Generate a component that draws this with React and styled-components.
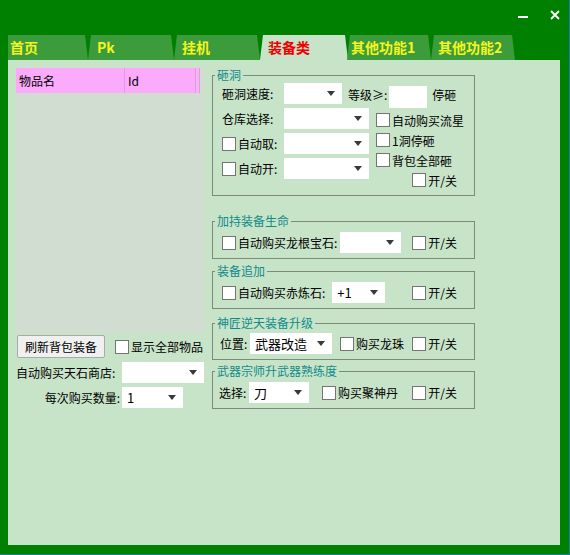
import React from 'react'
import styled, { createGlobalStyle } from 'styled-components';

const GlobalStyle = createGlobalStyle`
    html, body {
        margin: 0;
        padding: 0;
    }
    body {
        font-family: "Noto Sans CJK SC", "Liberation Sans", sans-serif;
        font-size: 12px;
        color: #000;
    }
`;

const Window = styled.div`
    width: 570px;
    height: 555px;
    background: #008000;
    display: flex;
    flex-direction: column;
    box-sizing: border-box;
    border-right: 1px solid #1c7f9c;
    border-bottom: 1px solid #1c7f9c;
`;

const TitleBar = styled.div`
    height: 35px;
    display: flex;
    justify-content: flex-end;
    align-items: flex-start;
    gap: 21px;
    padding: 10px 9px 0 0;
    box-sizing: border-box;
`;

const TabStrip = styled.div`
    height: 25px;
    display: flex;
    padding-left: 8px;
`;

const Tab = styled.div`
    width: ${p => p.$w}px;
    margin-right: ${p => p.$active ? -1 : 0}px;
    background: ${p => p.$active ? '#c8e4c8' : '#3c9c3c'};
    color: ${p => p.$active ? '#f00000' : '#f5f51e'};
    font-weight: bold;
    font-size: 14px;
    line-height: 25px;
    padding-left: ${p => p.$pad}px;
    box-sizing: border-box;
    white-space: nowrap;
    clip-path: ${p => p.$first
        ? 'polygon(0 0, calc(100% - 3px) 0, 100% 100%, 0 100%)'
        : 'polygon(3px 0, calc(100% - 3px) 0, 100% 100%, 0 100%)'};
`;

const Panel = styled.div`
    flex: 1;
    margin: 0 9px 9px 8px;
    background: #c8e4c8;
    display: flex;
    gap: 7px;
    padding: 7px 0 0 8px;
`;

const LeftCol = styled.div`
    width: 189px;
    display: flex;
    flex-direction: column;
`;

const List = styled.div`
    height: 266px;
    background: #d0ddd0;
    padding-top: 1px;
    box-sizing: border-box;
`;

const ListHeader = styled.div`
    display: flex;
    height: 25px;
    width: 184px;
`;

const HeaderCell = styled.div`
    width: ${p => p.$w}px;
    background: ${p => p.$stub ? '#f3b6f3' : '#fcaafc'};
    border-right: 1px solid #e39ae3;
    padding-left: 3px;
    line-height: 25px;
    box-sizing: border-box;
`;

const ButtonRow = styled.div`
    display: flex;
    align-items: center;
    gap: 10px;
    margin-top: 2px;
    padding-left: 1px;
`;

const PushButton = styled.button`
    width: 88px;
    height: 23px;
    background: #f0f0f0;
    border: 1px solid #a9a9a9;
    border-radius: 2px;
    font: inherit;
    padding: 0;
    color: #000;
`;

const FormRow = styled.div`
    display: flex;
    align-items: ${p => p.$top ? 'flex-start' : 'center'};
    margin-top: ${p => p.$mt || 0}px;
    padding-top: ${p => p.$pt || 0}px;
    height: ${p => p.$h || 21}px;
`;

const Label = styled.span`
    width: ${p => p.$w ? `${p.$w}px` : 'auto'};
    flex-shrink: 0;
    text-align: ${p => p.$right ? 'right' : 'left'};
    margin-left: ${p => p.$ml || 0}px;
    line-height: ${p => p.$lh ? `${p.$lh}px` : 'normal'};
    white-space: nowrap;
`;

const DropBox = styled.div`
    width: ${p => p.$w}px;
    height: 21px;
    margin-left: ${p => p.$ml || 0}px;
    background: #fff;
    display: flex;
    align-items: center;
    padding-left: 5px;
    box-sizing: border-box;
    flex-shrink: 0;
    font-size: 13px;
`;

const Caret = styled.span`
    margin-left: auto;
    margin-right: 7px;
    border-left: 4px solid transparent;
    border-right: 4px solid transparent;
    border-top: 5px solid #3a3a3a;
`;

const TextBox = styled.div`
    width: 38px;
    height: 22px;
    background: #fff;
    margin: 3px 0 0 2px;
    flex-shrink: 0;
`;

const Box = styled.span`
    width: 14px;
    height: 14px;
    background: #fff;
    border: 1px solid #747474;
    box-sizing: border-box;
    flex-shrink: 0;
`;

const CheckLabel = styled.label`
    display: inline-flex;
    align-items: center;
    gap: 2px;
    width: ${p => p.$w ? `${p.$w}px` : 'auto'};
    margin-left: ${p => p.$auto ? 'auto' : `${p.$ml || 0}px`};
    flex-shrink: 0;
    white-space: nowrap;
`;

const RightCol = styled.div`
    width: 263px;
    display: flex;
    flex-direction: column;
`;

const Group = styled.fieldset`
    margin: ${p => p.$mt || 0}px 0 0 0;
    padding: 0 17px 5px 9px;
    border: 1px solid #7c8a7c;
    min-width: 0;
`;

const GroupTitle = styled.legend`
    color: #108a8a;
    line-height: 16px;
    padding: 0 2px;
    margin-left: -7px;
`;

const StoneBody = styled.div`
    display: flex;
`;

const LeftStack = styled.div`
    display: flex;
    flex-direction: column;
    gap: 4px;
`;

const RightStack = styled.div`
    flex: 0 0 81px;
    min-width: 0;
    display: flex;
    flex-direction: column;
    margin-left: 7px;
    padding-top: 2px;
`;

const StackItem = styled.div`
    height: 20px;
    display: flex;
    align-items: center;
    justify-content: ${p => p.$end ? 'flex-end' : 'flex-start'};
`;

const Select = ({ w, ml, value }) => (
    <DropBox $w={ w } $ml={ ml }>
        { value }
        <Caret />
    </DropBox>
);

const Check = ({ children, w, ml, auto }) => (
    <CheckLabel $w={ w } $ml={ ml } $auto={ auto }>
        <Box />
        { children }
    </CheckLabel>
);

const tabs = [
    { name: '首页', w: 80, pad: 2 },
    { name: 'Pk', w: 86, pad: 9 },
    { name: '挂机', w: 86, pad: 8 },
    { name: '装备类', w: 88, pad: 8, active: true },
    { name: '其他功能1', w: 84, pad: 4 },
    { name: '其他功能2', w: 84, pad: 7 },
];

const App = () => {
    return (
        <Window>
            <GlobalStyle />
            <TitleBar>
                <svg width="11" height="10" viewBox="0 0 11 10">
                    <rect x="0" y="6" width="10" height="2" fill="#fff" />
                </svg>
                <svg width="10" height="10" viewBox="0 0 10 10">
                    <path d="M1 1 L9 9 M9 1 L1 9" stroke="#fff" strokeWidth="1.8" />
                </svg>
            </TitleBar>
            <TabStrip>
                {
                    tabs.map((t, i) => (
                        <Tab key={ t.name } $w={ t.w } $pad={ t.pad } $first={ i === 0 } $active={ t.active }>
                            { t.name }
                        </Tab>
                    ))
                }
            </TabStrip>
            <Panel>
                <LeftCol>
                    <List>
                        <ListHeader>
                            <HeaderCell $w={ 109 }>物品名</HeaderCell>
                            <HeaderCell $w={ 71 }>Id</HeaderCell>
                            <HeaderCell $w={ 4 } $stub />
                        </ListHeader>
                    </List>
                    <ButtonRow>
                        <PushButton>刷新背包装备</PushButton>
                        <Check>显示全部物品</Check>
                    </ButtonRow>
                    <FormRow $mt={ 4 }>
                        <Label $w={ 104 }>自动购买天石商店:</Label>
                        <Select w={ 82 } ml={ 2 } />
                    </FormRow>
                    <FormRow $mt={ 4 }>
                        <Label $w={ 104 } $right>每次购买数量:</Label>
                        <Select w={ 61 } ml={ 2 } value="1" />
                    </FormRow>
                </LeftCol>
                <RightCol>
                    <Group>
                        <GroupTitle>砸洞</GroupTitle>
                        <FormRow $h={ 25 } $top>
                            <Label $w={ 62 } $lh={ 21 }>砸洞速度:</Label>
                            <Select w={ 58 } />
                            <Label $ml={ 6 } $lh={ 23 }>等级≥:</Label>
                            <TextBox />
                            <Label $ml={ 5 } $lh={ 23 }>停砸</Label>
                        </FormRow>
                        <StoneBody>
                            <LeftStack>
                                <FormRow>
                                    <Label $w={ 62 }>仓库选择:</Label>
                                    <Select w={ 85 } />
                                </FormRow>
                                <FormRow>
                                    <Check w={ 62 }>自动取:</Check>
                                    <Select w={ 85 } />
                                </FormRow>
                                <FormRow>
                                    <Check w={ 62 }>自动开:</Check>
                                    <Select w={ 85 } />
                                </FormRow>
                            </LeftStack>
                            <RightStack>
                                <StackItem><Check>自动购买流星</Check></StackItem>
                                <StackItem><Check>1洞停砸</Check></StackItem>
                                <StackItem><Check>背包全部砸</Check></StackItem>
                                <StackItem $end><Check>开/关</Check></StackItem>
                            </RightStack>
                        </StoneBody>
                    </Group>
                    <Group $mt={ 17 }>
                        <GroupTitle>加持装备生命</GroupTitle>
                        <FormRow $pt={ 3 }>
                            <Check>自动购买龙根宝石:</Check>
                            <Select w={ 61 } ml={ 3 } />
                            <Check auto>开/关</Check>
                        </FormRow>
                    </Group>
                    <Group $mt={ 4 }>
                        <GroupTitle>装备追加</GroupTitle>
                        <FormRow $pt={ 3 }>
                            <Check>自动购买赤炼石:</Check>
                            <Select w={ 53 } ml={ 7 } value="+1" />
                            <Check auto>开/关</Check>
                        </FormRow>
                    </Group>
                    <Group $mt={ 6 }>
                        <GroupTitle>神匠逆天装备升级</GroupTitle>
                        <FormRow $pt={ 2 }>
                            <Label $w={ 30 } $ml={ -2 }>位置:</Label>
                            <Select w={ 82 } value="武器改造" />
                            <Check ml={ 8 }>购买龙珠</Check>
                            <Check auto>开/关</Check>
                        </FormRow>
                    </Group>
                    <Group $mt={ 3 }>
                        <GroupTitle>武器宗师升武器熟练度</GroupTitle>
                        <FormRow $pt={ 3 }>
                            <Label $w={ 30 } $ml={ -3 }>选择:</Label>
                            <Select w={ 60 } value="刀" />
                            <Check ml={ 13 }>购买聚神丹</Check>
                            <Check auto>开/关</Check>
                        </FormRow>
                    </Group>
                </RightCol>
            </Panel>
        </Window>
    );
}

export default App;
